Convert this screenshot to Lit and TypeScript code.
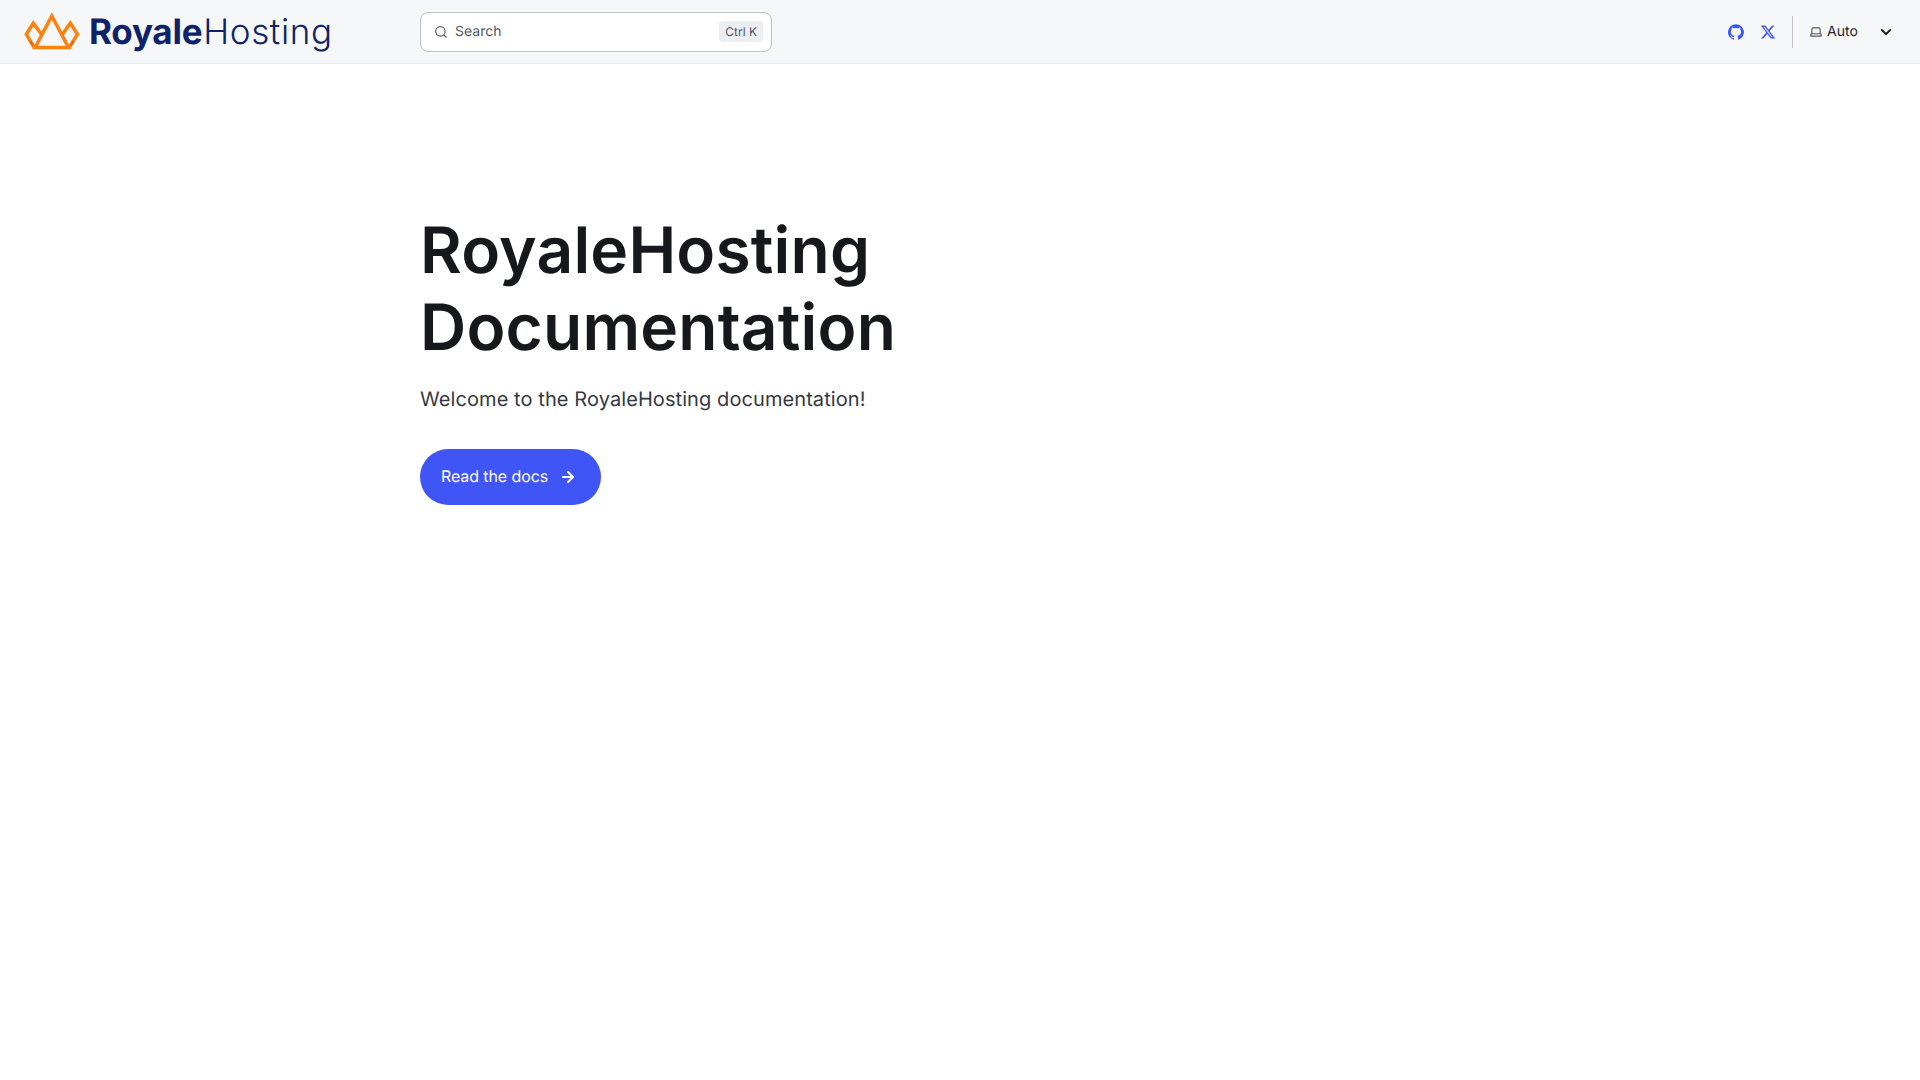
import { LitElement, html, css, svg } from "lit";
import { customElement } from "lit/decorators.js";

const icon = (d: string, cls: string) =>
  html`<svg class=${cls} viewBox="0 0 24 24" fill="currentColor" aria-hidden="true">${svg`<path d=${d}></path>`}</svg>`;

const ICONS = {
  search: "M21.71 20.29 18 16.61A9 9 0 1 0 16.61 18l3.68 3.68a1 1 0 0 0 1.42 0 1 1 0 0 0 0-1.39ZM11 18a7 7 0 1 1 0-14 7 7 0 0 1 0 14Z",
  github: "M12 .3a12 12 0 0 0-3.8 23.38c.6.12.83-.26.83-.57L9 21.07c-3.34.72-4.04-1.61-4.04-1.61-.55-1.39-1.34-1.76-1.34-1.76-1.08-.74.09-.73.09-.73 1.2.09 1.83 1.24 1.83 1.24 1.08 1.83 2.81 1.3 3.5 1 .1-.78.42-1.31.76-1.61-2.67-.3-5.47-1.33-5.47-5.93 0-1.31.47-2.38 1.24-3.22-.14-.3-.54-1.52.1-3.18 0 0 1-.32 3.3 1.23a11.5 11.5 0 0 1 6 0c2.28-1.55 3.29-1.23 3.29-1.23.64 1.66.24 2.88.12 3.18a4.65 4.65 0 0 1 1.23 3.22c0 4.61-2.8 5.63-5.48 5.92.42.36.81 1.1.81 2.22l-.01 3.29c0 .32.21.69.82.57A12 12 0 0 0 12 .3Z",
  x: "M18.244 2.25h3.308l-7.227 8.26 8.502 11.24H16.17l-5.214-6.817L4.99 21.75H1.68l7.73-8.835L1.254 2.25H8.08l4.713 6.231zm-1.161 17.52h1.833L7.084 4.126H5.117z",
  laptop: "M20 14.18V7a3 3 0 0 0-3-3H7a3 3 0 0 0-3 3v7.18A3 3 0 0 0 2 17v2a1 1 0 0 0 1 1h18a1 1 0 0 0 1-1v-2a3 3 0 0 0-2-2.82ZM6 7a1 1 0 0 1 1-1h10a1 1 0 0 1 1 1v7H6V7Zm14 11H4v-1a1 1 0 0 1 1-1h14a1 1 0 0 1 1 1v1Z",
  chevron: "M17 9.17a1 1 0 0 0-1.41 0L12 12.71 8.46 9.17a1 1 0 1 0-1.41 1.42l4.24 4.24a1.002 1.002 0 0 0 1.42 0L17 10.59a1.002 1.002 0 0 0 0-1.42Z",
  arrow: "M17.92 11.62a1.001 1.001 0 0 0-.21-.33l-5-5a1.003 1.003 0 1 0-1.42 1.42l3.3 3.29H7a1 1 0 0 0 0 2h7.59l-3.3 3.29a1.002 1.002 0 0 0 .325 1.639 1 1 0 0 0 1.095-.219l5-5a1 1 0 0 0 .21-.33 1 1 0 0 0 0-.76Z",
};

@customElement("app-root")
export class AppRoot extends LitElement {
  static styles = css`
    :host {
      display: block;
      min-height: 1080px;
      background: #fff;
      font-family: Inter, "Liberation Sans", sans-serif;
      color: #17181c;
      text-rendering: geometricPrecision;
    }
    header {
      display: flex;
      align-items: center;
      height: 64px;
      box-sizing: border-box;
      padding: 0 24px;
      background: #f6f7f9;
      border-bottom: 1px solid #e8eaee;
    }
    .brand {
      display: flex;
      align-items: center;
      width: 396px;
      flex: none;
      gap: 7px;
    }
    .crown { width: 58px; height: 44px; flex: none; }
    .wordmark {
      font-size: 35px;
      line-height: 42px;
      color: #0f2369;
      white-space: nowrap;
    }
    .wordmark b { font-weight: 700; letter-spacing: -0.25px; }
    .wordmark span { font-weight: 300; letter-spacing: 0.62px; margin-left: 1px; }
    .search {
      display: flex;
      align-items: center;
      width: 352px;
      height: 40px;
      box-sizing: border-box;
      padding: 0 8px 0 13px;
      background: #fff;
      border: 1px solid #bfc2c8;
      border-radius: 8px;
      color: #545861;
      font-size: 14px;
    }
    .search-icon { width: 14px; height: 14px; margin-right: 7px; }
    .search span { padding-bottom: 1px; }
    kbd {
      margin-left: auto;
      padding: 0 6px;
      height: 21px;
      display: flex;
      align-items: center;
      background: #eceef2;
      border-radius: 4px;
      font: 12px Inter, sans-serif;
    }
    .right {
      margin-left: auto;
      display: flex;
      align-items: center;
    }
    .social { width: 16px; height: 16px; color: #3f55f5; }
    .social.tw { margin-left: 16px; }
    .divider {
      width: 1px;
      height: 32px;
      background: #bfc2c8;
      margin: 0 16px 0 16px;
    }
    .theme {
      display: flex;
      align-items: center;
      color: #23252f;
      font-size: 14px;
      width: 87px;
    }
    .laptop { width: 14px; height: 14px; margin-right: 4px; color: #545861; }
    .theme span { padding-bottom: 1px; }
    .chev { width: 24px; height: 24px; margin: 0 -2px 0 auto; color: #17181c; }
    main { padding: 149px 0 0 420px; }
    h1 {
      margin: 0;
      font-size: 64px;
      line-height: 1.2;
      font-weight: 640;
      letter-spacing: 0.2px;
      width: 600px;
      color: #17181c;
    }
    .tagline {
      margin: 15px 0 32px;
      font-size: 20px;
      line-height: 35px;
      letter-spacing: 0.085px;
      font-weight: 380;
      color: #353841;
    }
    .cta {
      display: inline-flex;
      align-items: center;
      gap: 8px;
      height: 56px;
      box-sizing: border-box;
      padding: 0 21px 1px 21px;
      border-radius: 999px;
      background: #3f55f5;
      color: #fff;
      font-size: 16px;
      letter-spacing: -0.1px;
      text-decoration: none;
    }
    .arrow { width: 24px; height: 24px; margin-top: 1px; }
  `;

  render() {
    return html`
      <header>
        <div class="brand">
          <svg class="crown" viewBox="24.5 10 58 44" fill="none" stroke="#ff8210" stroke-width="3.5" stroke-linejoin="miter">
            <path d="M52.3 16 L35.6 47.5 H69 Z"></path>
            <path d="M42.5 35 L33.8 23.2 L26.8 34.3 L34.5 47"></path>
            <path d="M62.5 35 L70.8 23.2 L78 34.3 L70 47"></path>
            <path d="M30.6 41 L33.4 45.6 M74.2 41 L71.6 45.6" stroke="#a85a14" stroke-opacity="0.55" stroke-width="2"></path>
          </svg>
          <div class="wordmark"><b>Royale</b><span>Hosting</span></div>
        </div>
        <div class="search">
          ${icon(ICONS.search, "search-icon")}
          <span>Search</span>
          <kbd>Ctrl K</kbd>
        </div>
        <div class="right">
          ${icon(ICONS.github, "social")}
          ${icon(ICONS.x, "social tw")}
          <div class="divider"></div>
          <div class="theme">
            ${icon(ICONS.laptop, "laptop")}
            <span>Auto</span>
            ${icon(ICONS.chevron, "chev")}
          </div>
        </div>
      </header>
      <main>
        <h1>RoyaleHosting Documentation</h1>
        <div class="tagline">Welcome to the RoyaleHosting documentation!</div>
        <a class="cta" href="#">Read the docs ${icon(ICONS.arrow, "arrow")}</a>
      </main>
    `;
  }
}
